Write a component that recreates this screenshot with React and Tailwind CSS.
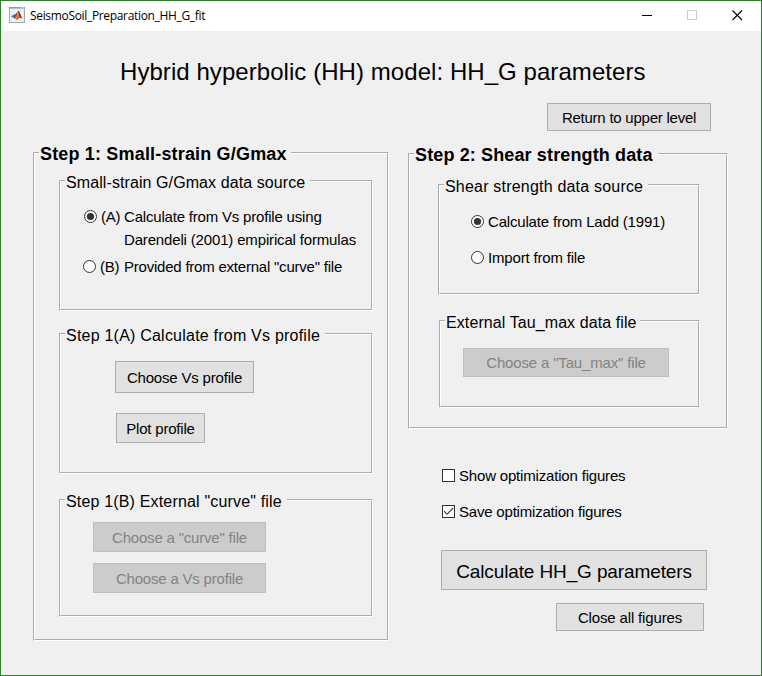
const FONT = "font-['Liberation_Sans',Arial,sans-serif]";

function Panel({ className, title, titleClass, children }) {
  return (
    <div className={`border border-t-[#acacac] border-l-[#acacac] border-r-white border-b-white ${className}`}>
      <div className="h-full border border-t-white border-l-white border-r-[#acacac] border-b-[#acacac]">
        <div className={`-mt-2.5 ml-1 h-5 whitespace-nowrap bg-[#f0f0f0] pl-px ${titleClass}`}>{title}</div>
        {children}
      </div>
    </div>
  );
}

function Button({ className, disabled, children }) {
  const tone = disabled
    ? "border-[#bfbfbf] bg-[#cccccc] text-[#838383]"
    : "border-[#adadad] bg-[#e1e1e1] text-black";
  return (
    <button
      disabled={disabled}
      className={`flex items-center justify-center whitespace-nowrap border leading-5 ${tone} ${className}`}
    >
      {children}
    </button>
  );
}

function Radio({ checked }) {
  return (
    <svg className="mt-[3px] h-[13px] w-[13px] shrink-0" viewBox="0 0 13 13">
      <circle cx="6.5" cy="6.5" r="6" fill="#fff" stroke="#333" strokeWidth="1" />
      {checked && <circle cx="6.5" cy="6.5" r="3.6" fill="#333" />}
    </svg>
  );
}

function Check({ checked }) {
  return (
    <svg className="mt-[3px] h-[13px] w-[13px] shrink-0" viewBox="0 0 13 13">
      <rect x="0.5" y="0.5" width="12" height="12" fill="#fff" stroke="#333" />
      {checked && <path d="M2 6.2 L5 9.2 L11.2 3" fill="none" stroke="#444" strokeWidth="1.1" />}
    </svg>
  );
}

function AppIcon() {
  return (
    <svg className="mt-1.5 ml-2 h-4 w-4 shrink-0" viewBox="0 0 16 16">
      <rect x="0.5" y="0.5" width="15" height="15" fill="#eceff3" stroke="#a3a9b0" />
      <rect x="0" y="0" width="16" height="1.6" fill="#7f9fc0" />
      <rect x="12" y="0.4" width="3" height="0.8" fill="#dbe6f1" />
      <path d="M2 9.2 L5.2 7.6 L7 9.3 L5 11.2 Z" fill="#3a78bd" />
      <path d="M5.2 7.6 Q7.2 7 9 4.2 L7.6 9.6 L5 11.2 Z" fill="#46657f" />
      <path d="M9 3.6 Q8.4 8.6 5.2 11.2 Q6.6 11.2 7.6 13 Q9.6 12.4 10.8 10.6 Q10.6 6 9 3.6 Z" fill="#e0662a" />
      <path d="M9 3.6 Q10.2 3.8 11.4 7.2 Q12.4 10.4 14 12 Q12.2 10.6 10.8 10.8 Q9.8 7 9 3.6 Z" fill="#8c2014" />
      <path d="M8.9 5.6 Q9 9 7.4 11.6" fill="none" stroke="#f5a02c" strokeWidth="0.8" />
    </svg>
  );
}

function TitleBar() {
  return (
    <div className="flex h-[30px] bg-white">
      <AppIcon />
      <div className="ml-[5px] mt-[5px] whitespace-nowrap font-['Open_Sans',sans-serif] text-xs leading-5 tracking-[-0.33px] text-black">
        SeismoSoil_Preparation_HH_G_fit
      </div>
      <div className="ml-auto mr-[18px] mt-[9px] flex h-2.5 gap-[35px]">
        <div className="mt-[5px] h-px w-2.5 bg-black" />
        <div className="h-2.5 w-2.5 border border-[#cccccc]" />
        <svg className="h-[11px] w-[11px]" viewBox="0 0 11 11">
          <path d="M0.5 0.5 L10 10 M10 0.5 L0.5 10" stroke="#000" strokeWidth="1.1" />
        </svg>
      </div>
    </div>
  );
}

export default function App() {
  return (
    <div className={`h-[676px] w-[762px] overflow-hidden border border-[#278427] bg-[#f0f0f0] text-[15px] text-black ${FONT}`}>
      <TitleBar />
      <div className="flex h-[121px] flex-col">
        <h1 className="ml-[119px] mt-[25px] h-8 whitespace-nowrap text-2xl leading-8 tracking-[0.06px]">
          Hybrid hyperbolic (HH) model: HH_G parameters
        </h1>
        <Button className="ml-[546px] mt-[15px] h-7 w-[164px] pt-0.5 tracking-[-0.24px]">Return to upper level</Button>
      </div>

      <div className="flex items-start">
        <Panel
          className="ml-8 h-[489px] w-[356px]"
          title="Step 1: Small-strain G/Gmax"
          titleClass="w-[252px] text-lg leading-5 font-bold tracking-[0.17px]"
        >
          <Panel
            className="ml-6 mt-4 h-[131px] w-[314px]"
            title="Small-strain G/Gmax data source"
            titleClass="w-[245px] text-base leading-[22px] tracking-[0.09px]"
          >
            <div className="ml-[23px] mt-[15px] flex h-5 leading-5">
              <Radio checked />
              <span className="ml-1 w-[23px] tracking-[-0.2px]">(A)</span>
              <span className="whitespace-nowrap tracking-[-0.19px]">Calculate from Vs profile using</span>
            </div>
            <div className="ml-[63px] mt-[3px] h-5 whitespace-nowrap leading-5 tracking-[-0.16px]">
              Darendeli (2001) empirical formulas
            </div>
            <div className="ml-[22px] mt-[7px] flex h-5 leading-5">
              <Radio />
              <span className="ml-1 w-6 tracking-[-0.2px]">(B)</span>
              <span className="whitespace-nowrap tracking-[-0.22px]">Provided from external "curve" file</span>
            </div>
          </Panel>

          <Panel
            className="ml-6 mt-[22px] h-[141px] w-[314px]"
            title="Step 1(A) Calculate from Vs profile"
            titleClass="w-[260px] text-base leading-[22px] tracking-[0.22px]"
          >
            <Button className="ml-[54px] mt-4 h-8 w-[139px] pt-0.5 tracking-[-0.19px]">Choose Vs profile</Button>
            <Button className="ml-[55px] mt-5 h-[30px] w-[89px] pt-0.5 tracking-[-0.2px]">Plot profile</Button>
          </Panel>

          <Panel
            className="ml-6 mt-[25px] h-[118px] w-[314px]"
            title={'Step 1(B) External "curve" file'}
            titleClass="w-[222px] text-base leading-[22px] tracking-[0.17px]"
          >
            <Button disabled className="ml-8 mt-[11px] h-[30px] w-[173px] pt-0.5 tracking-[-0.2px]">
              Choose a "curve" file
            </Button>
            <Button disabled className="ml-8 mt-[11px] h-[30px] w-[173px] pt-0.5 tracking-[-0.2px]">
              Choose a Vs profile
            </Button>
          </Panel>
        </Panel>

        <div className="ml-[19px] mt-px">
          <Panel
            className="h-[276px] w-[320px]"
            title="Step 2: Shear strength data"
            titleClass="w-[244px] text-lg leading-5 font-bold tracking-[0.13px]"
          >
            <Panel
              className="ml-7 mt-[19px] h-[111px] w-[262px]"
              title="Shear strength data source"
              titleClass="w-[204px] text-base leading-[22px] tracking-[0.2px]"
            >
              <div className="ml-[31px] mt-4 flex h-5 leading-5">
                <Radio checked />
                <span className="ml-1 whitespace-nowrap tracking-[-0.18px]">Calculate from Ladd (1991)</span>
              </div>
              <div className="ml-[31px] mt-4 flex h-5 leading-5">
                <Radio />
                <span className="ml-1 whitespace-nowrap tracking-[-0.18px]">Import from file</span>
              </div>
            </Panel>

            <Panel
              className="ml-[29px] mt-[25px] h-[88px] w-[261px]"
              title="External Tau_max data file"
              titleClass="w-[195px] text-base leading-[22px] tracking-[0.09px]"
            >
              <Button disabled className="ml-[22px] mt-4 h-[29px] w-[206px] pt-px tracking-[-0.16px]">
                Choose a "Tau_max" file
              </Button>
            </Panel>
          </Panel>

          <div className="ml-[34px] mt-[37px] flex h-5 leading-5">
            <Check />
            <span className="ml-1 whitespace-nowrap tracking-[-0.18px]">Show optimization figures</span>
          </div>
          <div className="ml-[34px] mt-4 flex h-5 leading-5">
            <Check checked />
            <span className="ml-1 whitespace-nowrap tracking-[-0.2px]">Save optimization figures</span>
          </div>
          <Button className="ml-[33px] mt-7 h-10 w-[266px] pt-1 text-[19px] tracking-[-0.12px]">
            Calculate HH_G parameters
          </Button>
          <Button className="ml-[148px] mt-[13px] h-7 w-[148px] pt-0.5 tracking-[-0.15px]">Close all figures</Button>
        </div>
      </div>
    </div>
  );
}
